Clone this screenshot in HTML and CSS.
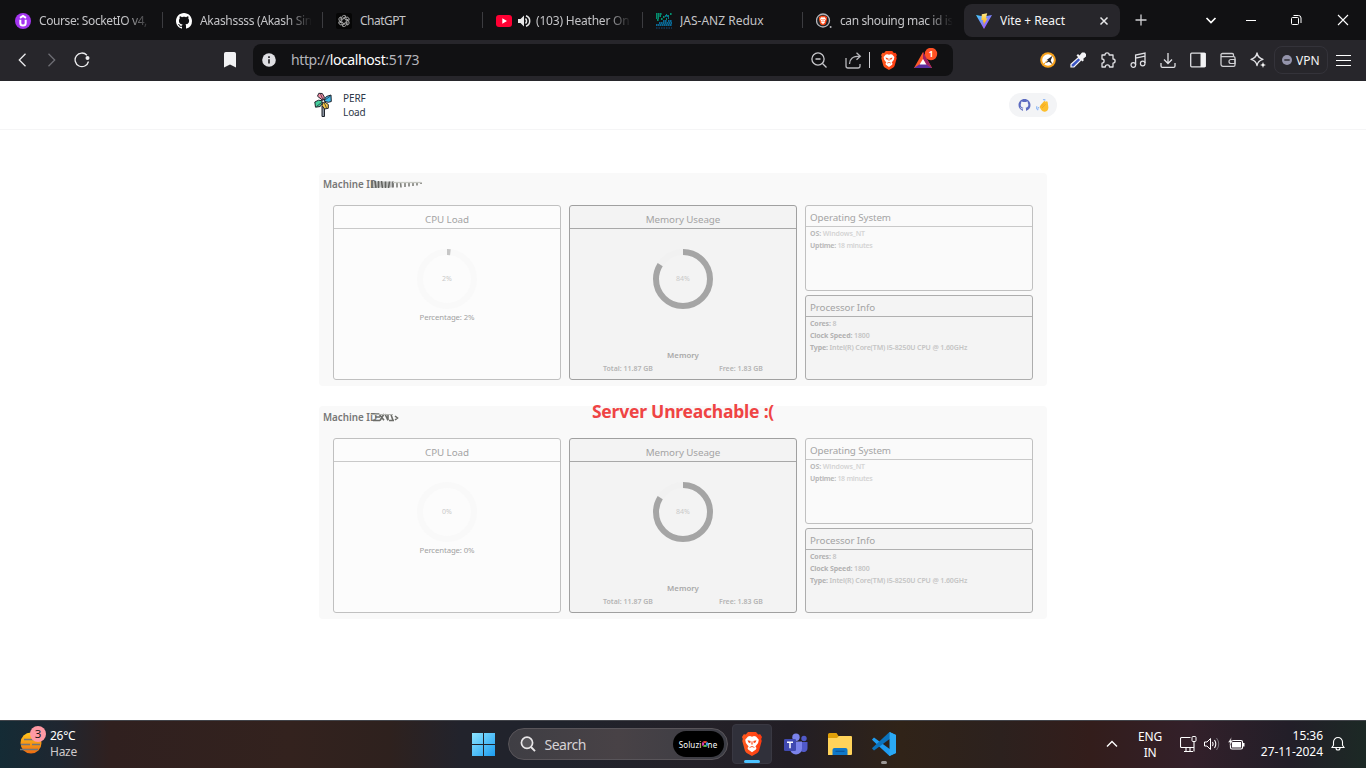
FILE: index.html
```html
<!DOCTYPE html>
<html lang="en">
<head>
<meta charset="utf-8">
<title>Vite + React</title>
<link rel="stylesheet" href="styles.css">
</head>
<body>
<svg class="defs" aria-hidden="true">
  <defs>
    <linearGradient id="viteA" x1="0" y1="0" x2="1" y2="1"><stop offset="0" stop-color="#41d1ff"/><stop offset="1" stop-color="#bd34fe"/></linearGradient>
    <linearGradient id="viteB" x1="0" y1="0" x2="0" y2="1"><stop offset="0" stop-color="#ffea83"/><stop offset="1" stop-color="#ffa800"/></linearGradient>
    <linearGradient id="braveG" x1="0" y1="0" x2="1" y2="0"><stop offset="0" stop-color="#ff5a1f"/><stop offset="1" stop-color="#ff3a10"/></linearGradient>
    <linearGradient id="winG" gradientUnits="userSpaceOnUse" x1="0" y1="0" x2="23" y2="23"><stop offset="0" stop-color="#8ce4ff"/><stop offset="1" stop-color="#1c9cf0"/></linearGradient>
    <linearGradient id="sunG" x1="0" y1="0" x2="0" y2="1"><stop offset="0" stop-color="#ffc81e"/><stop offset="1" stop-color="#ee6b10"/></linearGradient>
    <symbol id="github" viewBox="0 0 16 16"><path fill-rule="evenodd" d="M8 0C3.58 0 0 3.58 0 8c0 3.54 2.29 6.53 5.47 7.59.4.07.55-.17.55-.38 0-.19-.01-.82-.01-1.49-2.01.37-2.53-.49-2.69-.94-.09-.23-.48-.94-.82-1.13-.28-.15-.68-.52-.01-.53.63-.01 1.08.58 1.23.82.72 1.21 1.87.87 2.33.66.07-.52.28-.87.51-1.07-1.78-.2-3.64-.89-3.64-3.95 0-.87.31-1.59.82-2.15-.08-.2-.36-1.02.08-2.12 0 0 .67-.21 2.2.82.64-.18 1.32-.27 2-.27s1.36.09 2 .27c1.53-1.04 2.2-.82 2.2-.82.44 1.1.16 1.92.08 2.12.51.56.82 1.27.82 2.15 0 3.07-1.87 3.75-3.65 3.95.29.25.54.73.54 1.48 0 1.07-.01 1.93-.01 2.2 0 .21.15.46.55.38A8.01 8.01 0 0 0 16 8c0-4.42-3.58-8-8-8z"/></symbol>
    <symbol id="brave" viewBox="0 0 20 24"><path fill="url(#braveG)" d="M6 0h8l2.2 2.4 2-.2L20 5l-.8 2 .5 2-2.6 9.6c-.4 1.2-1.2 2-2.2 2.7L10 24l-4.9-2.7c-1-.7-1.8-1.5-2.2-2.7L.3 9l.5-2L0 5l1.8-2.8 2 .2z"/><path fill="#fff" d="M6 4.400 8 4l2 .7 2-.7 2 .4 2.800 3.300-.7 3.200-2.700 3.500 1.100 1.600-.6 1.400L10 20.300l-3.900-2.900-.6-1.400 1.100-1.600-2.700-3.500-.7-3.200z"/><path fill="#fb4a1b" d="m5.600 8.300 3.100.7-.5 2.300-1.900-1.100zM14.400 8.300l-3.100.7.5 2.300 1.900-1.100zM7.300 15.200l2.700-1.200 2.700 1.200-.5.600-2.200-.9-2.200.9zM9.600 9.200h.8l.3 3.200h-1.400z"/></symbol>
  </defs>
</svg>

<header class="browser">
  <div class="tabs">
    <div class="tab">
      <svg class="fav" viewBox="0 0 16 16"><circle cx="8" cy="8" r="8" fill="#a435f0"/><path d="M5 4.800 8 3l3 1.800M5.300 6.700v3.400a2.700 2.500 0 0 0 5.400 0V6.700" fill="none" stroke="#fff" stroke-width="2"/></svg>
      <span class="tab-title t1">Course: SocketIO v4,</span>
    </div>
    <div class="tab">
      <svg class="fav" fill="#fff"><use href="#github"/></svg>
      <span class="tab-title t2">Akashssss (Akash Sin</span>
    </div>
    <div class="tab">
      <svg class="fav" viewBox="0 0 16 16"><rect width="16" height="16" rx="2" fill="#060606"/><g fill="none" stroke="#c4c4c4" stroke-width=".8"><path id="petal" d="M5.800 8.800V4.600a2.300 2.300 0 0 1 4.200-1.200L6.800 5.300"/><use href="#petal" transform="rotate(60 8 8)"/><use href="#petal" transform="rotate(120 8 8)"/><use href="#petal" transform="rotate(180 8 8)"/><use href="#petal" transform="rotate(240 8 8)"/><use href="#petal" transform="rotate(300 8 8)"/></g></svg>
      <span class="tab-title t3">ChatGPT</span>
    </div>
    <div class="tab">
      <svg class="fav" viewBox="0 0 16 16"><rect y="2" width="16" height="12" rx="3" fill="#ff0033"/><path d="M6.300 5.200v5.600L11 8z" fill="#fff"/></svg>
      <svg class="audio" viewBox="0 0 14 14"><path d="M1 5v4h2.500L7 12.500v-11L3.500 5z" fill="#e8e8e8"/><path d="M8.500 4.500a3.500 3.500 0 0 1 0 5M9 1.800a5.500 5.500 0 0 1 0 10.400" fill="none" stroke="#e8e8e8" stroke-width="1.500"/></svg>
      <span class="tab-title t4">(103) Heather On</span>
    </div>
    <div class="tab">
      <svg class="fav" viewBox="0 0 16 16"><path d="M0 1h6M0 3h5M0 5h3M7 4h2M10 2h1M12 3h1M14 1h2M1 7h2M5 6h2M10 6h1" stroke="#00b98e" stroke-width="1.600" stroke-dasharray="1.600 .4"/><path d="M9 3h3M12 5h1M7 8h4M12 8h4M3 10h13M0 12h16" stroke="#0787c2" stroke-width="1.600" stroke-dasharray="1.600 .4"/><path d="M0 15h16" stroke="#12304a" stroke-width="2" stroke-dasharray="1.500 1"/></svg>
      <span class="tab-title t5">JAS-ANZ Redux</span>
    </div>
    <div class="tab">
      <svg class="fav" viewBox="0 0 16 16"><circle cx="7" cy="7.500" r="6.500" fill="#202226" stroke="#b4b5ba" stroke-width="1.300"/><use href="#brave" x="2.500" y="2.500" width="9" height="10"/><circle cx="14.600" cy="14" r="1" fill="#b4b5ba"/></svg>
      <span class="tab-title t6">can shouing mac id is</span>
    </div>
    <div class="tab active">
      <svg class="fav" viewBox="0 0 16 16"><path d="m0 2 8 14 8-14-8 1.500z" fill="url(#viteA)"/><path d="M11.200.2 5.800 1.200 5.400 7.300l1.900-.3-.6 2.400 1.300-.4-.7 3.500L11.600 5.300l-1.800.3z" fill="url(#viteB)"/></svg>
      <span class="tab-title t7">Vite + React</span>
      <svg class="close" viewBox="0 0 10 10"><path d="m1.500 1.500 7 7m0-7-7 7" stroke="#e8e8ea" stroke-width="1.500"/></svg>
    </div>
    <svg class="plus" viewBox="0 0 12 12"><path d="M6 .5v11M.5 6h11" stroke="#d0d0d3" stroke-width="1.300"/></svg>
    <div class="winbtns">
      <svg class="tabsearch" width="12" height="12" viewBox="0 0 12 12"><path d="m1.500 4 4.500 4.500L10.500 4" fill="none" stroke="#fff" stroke-width="1.700"/></svg>
      <svg width="10" height="12" viewBox="0 0 10 12"><path d="M0 6.500h10" stroke="#fff"/></svg>
      <svg width="11" height="12" viewBox="0 0 11 12"><rect x=".5" y="3.500" width="7" height="7" rx="1" fill="none" stroke="#fff"/><path d="M2.500 1.500h5a2.500 2.500 0 0 1 2.500 2.500v5" fill="none" stroke="#fff"/></svg>
      <svg width="12" height="12" viewBox="0 0 12 12"><path d="m1 1 10 10m0-10L1 11" stroke="#fff" stroke-width="1.100"/></svg>
    </div>
  </div>
  <div class="toolbar">
    <svg class="nav-back" viewBox="0 0 10 14"><path d="M8.500.8 2.300 7l6.200 6.200" fill="none" stroke="#ececee" stroke-width="1.300"/></svg>
    <svg class="nav-fwd" viewBox="0 0 10 14"><path d="M1.500.8 7.700 7l-6.200 6.200" fill="none" stroke="#6e6e74" stroke-width="1.300"/></svg>
    <svg class="nav-reload" viewBox="0 0 16 16"><path d="M12.900 3.200A6.800 6.800 0 1 0 14.500 9.500" fill="none" stroke="#ececee" stroke-width="1.300"/><circle cx="13.500" cy="6" r="2" fill="#ececee"/></svg>
    <svg class="bookmark" viewBox="0 0 12 16"><path d="M0 1.800A1.800 1.800 0 0 1 1.800 0h8.400A1.800 1.800 0 0 1 12 1.800V15.500L6 12.500 0 15.500z" fill="#f2f2f4"/></svg>
    <div class="urlbar">
      <svg class="info" viewBox="0 0 14 14"><circle cx="7" cy="7" r="6.800" fill="#dfdfe3"/><path d="M7 6.200v4.300M7 3.200v1.700" stroke="#17171a" stroke-width="1.600"/></svg>
      <span class="url">http://<b>localhost</b>:5173</span>
      <svg class="zoomout" viewBox="0 0 16 16"><circle cx="7" cy="7" r="6.100" fill="none" stroke="#c8c8cc" stroke-width="1.300"/><path d="M4.500 7h5M11.500 11.500l4 4" stroke="#c8c8cc" stroke-width="1.300"/></svg>
      <svg class="share" viewBox="0 0 17 17"><path d="M1 6v8a2 2 0 0 0 2 2h10a2 2 0 0 0 2-2v-2M4.500 12c0-5 3-7.800 10.500-7.800M11.500.8 15.300 4.200l-3.800 3.600" fill="none" stroke="#b8b8bc" stroke-width="1.300"/></svg>
      <i class="divider"></i>
      <svg class="lion"><use href="#brave"/></svg>
      <svg class="rewards" viewBox="0 0 24 22"><path d="M9 4 0 20h18z" fill="#ff5a2a"/><path d="m0 20 9-6 9 6z" fill="#5b2fa0"/><path d="m9 4 9 16-6-4-3-5z" fill="#9e1f63"/><path d="m9 11 3.400 5.500H5.600z" fill="#fff"/><circle cx="17" cy="6" r="6.200" fill="#ff5025"/><text x="17" y="9" text-anchor="middle" class="badge-text">1</text></svg>
    </div>
    <div class="tools">
      <svg width="16" height="16" viewBox="0 0 16 16"><circle cx="8" cy="8" r="7.800" fill="#f7a11b"/><circle cx="8" cy="8" r="5.800" fill="#fff"/><path d="M3.500 5.500 7 7.800l5.500-4-1.800 4.700 1.800 3.700-3.700-2.500-3.300 1.500L8 8.500z" fill="#27262b"/><path d="m4 12 3-3.500" stroke="#f7a11b"/></svg>
      <svg width="16" height="16" viewBox="0 0 16 16"><path d="m9.500 3.500 2.500-3h2.500L16 2v2.500l-3 2.500 1 1-1.500 1.500-6-6L8 2z" fill="#f5f5f8"/><path d="m8.500 5.500 2.500 2.500-7 7H1v-2.800z" fill="#3b55c4" stroke="#f5f5f8" stroke-width="1.200"/></svg>
      <svg width="16" height="16" viewBox="0 0 16 16"><path d="M2 3h3a2 2 0 0 1 4.200 0H13v4a2.100 2.100 0 0 1 0 4.200V15H9.500a2 2 0 0 0-4.200 0H2v-3.800A2.100 2.100 0 0 0 2 7z" fill="none" stroke="#e0e0e4" stroke-width="1.300" stroke-linejoin="round"/></svg>
      <svg width="16" height="16" viewBox="0 0 16 16"><path d="M5.600 13V3l9.400-2v10M5.600 6.200 15 4.200" fill="none" stroke="#e0e0e4" stroke-width="1.300"/><circle cx="3.300" cy="13" r="2.300" fill="none" stroke="#e0e0e4" stroke-width="1.200"/><circle cx="12.700" cy="11.500" r="2.300" fill="none" stroke="#e0e0e4" stroke-width="1.200"/></svg>
      <svg width="16" height="16" viewBox="0 0 16 16"><path d="M8 1v10M4 7.500l4 4 4-4M1 11v3a1.300 1.300 0 0 0 1.300 1.300h11.400A1.300 1.300 0 0 0 15 14v-3" fill="none" stroke="#e0e0e4" stroke-width="1.300"/></svg>
      <svg width="16" height="16" viewBox="0 0 16 16"><rect x=".7" y="1.200" width="14.600" height="13.600" rx="1" fill="none" stroke="#e0e0e4" stroke-width="1.300"/><path d="M10.500 1h5v14h-5z" fill="#f2f2f4"/></svg>
      <svg width="16" height="16" viewBox="0 0 16 16"><path d="M13.500 4V2.800a1.300 1.300 0 0 0-1.300-1.300H2.500a1.500 1.500 0 0 0 0 3.200h11.200A1.300 1.300 0 0 1 15 6v7a1.300 1.300 0 0 1-1.300 1.300H3A2 2 0 0 1 1 12.300V3" fill="none" stroke="#cfcfd3" stroke-width="1.300"/><path d="M15 7.500h-4a2 2 0 0 0 0 4h4z" fill="none" stroke="#cfcfd3" stroke-width="1.200"/></svg>
      <svg width="16" height="16" viewBox="0 0 16 16"><path d="M7 1q1 5 6 6.300Q8 8.500 7 13.500 6 8.500 1 7.300 6 6 7 1z" fill="none" stroke="#e0e0e4" stroke-width="1.300" stroke-linejoin="round"/><path d="m13 10 .8 2.200 2.200.8-2.200.8L13 16l-.8-2.200L10 13l2.200-.8z" fill="#fff"/></svg>
    </div>
    <div class="vpn"><svg width="10" height="10" viewBox="0 0 10 10"><circle cx="5" cy="5" r="5" fill="#9494ab"/><path d="M2.300 5h5.400" stroke="#27262b" stroke-width="1.400"/></svg><span>VPN</span></div>
    <svg class="menu" viewBox="0 0 15 13"><path d="M0 1.500h15M0 6.500h15M0 11.500h15" stroke="#fff" stroke-width="1.200"/></svg>
  </div>
</header>

<main class="page">
  <nav class="appbar">
    <div class="logo">
      <svg width="18" height="26" viewBox="0 0 18 26"><path d="M8 14h2.500v10.500H8z" fill="#8a929e" stroke="#20242c"/><g stroke="#20242c" stroke-width="1" stroke-linejoin="round"><path d="M9.500 9 3.500 4.200 4.800 1.300l3.500.2 2 3.500z" fill="#f78fa7"/><path d="m9.500 9 2.800-4.500L17 3l.3 6.500-3 .8z" fill="#3fb8e8"/><path d="m9.500 9 4.800 3.500v3.800l-3.800.7L8 13.500z" fill="#f6c945"/><path d="m9.500 9-3.300 5.500-4.700.7L.8 10l3.700-1.800z" fill="#45cf9d"/><path d="M9.500 9 6.500 2M9.500 9l7-5M9.500 9l3 7M9.500 9l-7 5.500" fill="none" stroke-width=".7"/><circle cx="9.300" cy="9.200" r="1.500" fill="#e9edf0"/></g></svg>
      <div class="brand">PERF<br>Load</div>
    </div>
    <div class="pill">
      <svg width="13" height="12" fill="#5c6bc0"><use href="#github"/></svg>
      <svg width="13" height="13" viewBox="0 0 13 13"><path d="M3.500 8 5 5.500l3-3.200q1-.8 1.300 0L9.600 3l1-.7q1.300-.2 1.200 1.700l.6 4.500q-.3 4-3.400 4.200-2.300.3-3.700-1.700z" fill="#fcbf2e"/><path d="m5 7.500 3-3M6 9l3.500-3.800" stroke="#f29a16" stroke-width=".7"/><path d="M7 .8q1.500-.6 2.300.5M.7 7.200v2.300l1.500 1.600M2.500 8v1.500" fill="none" stroke="#8fb8f5" stroke-width="1.200"/></svg>
    </div>
  </nav>

  <div class="board">
    <section class="machine">
      <h2 class="machine-id">Machine ID<svg class="smudge" width="62" height="16" viewBox="0 0 62 16"><path d="M0 8.500h22" stroke="#bfc0bf" stroke-width="6"/><path d="M1 5v7M4 5l1 7M7.500 5v7M10.500 5l1 7M14.500 5.500v6.500M18.500 5.500l-1 6.500M22 5.500v6" stroke="#626360" stroke-width="1.600"/><path d="M26 6v5.500M29.500 6l.5 5.500M34 6.500v4.500M38 6.500v4M42 6.500v3.500M46 6.500v3M50 6.500v1.600" stroke="#7d7e79" stroke-width="1.600"/><path d="M22 6.500h28" stroke="#c6c8c2" stroke-width="1.300"/></svg></h2>
      <div class="cards">
        <article class="card cpu">
          <h3>CPU Load</h3>
          <svg class="ring" viewBox="0 0 60 60"><circle cx="30" cy="30" r="27" class="track-light"/><path d="M30 3A27 27 0 0 1 33.400 3.200" class="arc-light"/><text x="30" y="32">2%</text></svg>
          <p class="pct">Percentage: 2%</p>
        </article>
        <article class="card mem">
          <h3>Memory Useage</h3>
          <svg class="ring" viewBox="0 0 60 60"><circle cx="30" cy="30" r="27" class="track-mid"/><circle cx="30" cy="30" r="27" pathLength="100" stroke-dasharray="84 16" transform="rotate(-90 30 30)" class="arc-mid"/><text x="30" y="32">84%</text></svg>
          <p class="mem-title">Memory</p>
          <div class="mem-row"><span>Total: 11.87 GB</span><span>Free: 1.83 GB</span></div>
        </article>
        <div class="side">
          <article class="card os">
            <h3>Operating System</h3>
            <p><b>OS:</b> Windows_NT</p>
            <p><b>Uptime:</b> 18 minutes</p>
          </article>
          <article class="card proc">
            <h3>Processor Info</h3>
            <p><b>Cores:</b> 8</p>
            <p><b>Clock Speed:</b> 1800</p>
            <p class="type"><b>Type:</b> Intel(R) Core(TM) i5-8250U CPU @ 1.60GHz</p>
          </article>
        </div>
      </div>
    </section>

    <section class="machine">
      <h2 class="machine-id">Machine ID<svg class="smudge" width="62" height="16" viewBox="0 0 62 16"><path d="M0 5h8M4 8h5M2 11.500h7M8 5l5 6.300M13 5l-4 6.500M14 5l3 6.300M17 5v6M18 11.500h5M20 5.500l2 6M24 7l2.500 2-2.500 2" fill="none" stroke="#6c6d69" stroke-width="1.600"/><path d="M0 5.500h22" stroke="#b5b6b2"/></svg></h2>
      <div class="cards">
        <article class="card cpu">
          <h3>CPU Load</h3>
          <svg class="ring" viewBox="0 0 60 60"><circle cx="30" cy="30" r="27" class="track-light"/><text x="30" y="32">0%</text></svg>
          <p class="pct">Percentage: 0%</p>
        </article>
        <article class="card mem">
          <h3>Memory Useage</h3>
          <svg class="ring" viewBox="0 0 60 60"><circle cx="30" cy="30" r="27" class="track-mid"/><circle cx="30" cy="30" r="27" pathLength="100" stroke-dasharray="84 16" transform="rotate(-90 30 30)" class="arc-mid"/><text x="30" y="32">84%</text></svg>
          <p class="mem-title">Memory</p>
          <div class="mem-row"><span>Total: 11.87 GB</span><span>Free: 1.83 GB</span></div>
        </article>
        <div class="side">
          <article class="card os">
            <h3>Operating System</h3>
            <p><b>OS:</b> Windows_NT</p>
            <p><b>Uptime:</b> 18 minutes</p>
          </article>
          <article class="card proc">
            <h3>Processor Info</h3>
            <p><b>Cores:</b> 8</p>
            <p><b>Clock Speed:</b> 1800</p>
            <p class="type"><b>Type:</b> Intel(R) Core(TM) i5-8250U CPU @ 1.60GHz</p>
          </article>
        </div>
      </div>
    </section>
    <div class="alert">Server Unreachable :(</div>
  </div>
</main>

<footer class="taskbar">
  <div class="weather">
    <svg width="28" height="32" viewBox="0 0 28 32"><circle cx="12" cy="18" r="10.500" fill="url(#sunG)"/><path d="M5 14.500h13M2 19.500h9M13 19.500h8M1 24.500h18" stroke="#74767a" stroke-width="1.600"/><circle cx="19" cy="9" r="8" fill="#ff99a4"/><text x="19" y="13" text-anchor="middle" class="wbadge">3</text></svg>
    <div class="wtext"><div>26°C</div><div class="haze">Haze</div></div>
  </div>
  <div class="apps">
    <svg class="start" viewBox="0 0 23 23"><path d="M0 0h11v11H0zM12 0h11v11H12zM0 12h11v11H0zM12 12h11v11H12z" fill="url(#winG)"/></svg>
    <div class="search">
      <svg width="16" height="16" viewBox="0 0 16 16"><circle cx="7" cy="6.800" r="5.600" fill="rgba(255,255,255,.12)" stroke="#e8e6e8" stroke-width="1.700"/><path d="m11 11 4 4.200" stroke="#e8e6e8" stroke-width="1.900"/></svg>
      <span class="search-label">Search</span>
      <span class="sol">Soluzi<i></i>ne</span>
    </div>
    <div class="app current"><svg width="20" height="24"><use href="#brave"/></svg></div>
    <div class="app teams"><svg width="24" height="23" viewBox="0 0 24 23"><circle cx="12" cy="4.200" r="3.700" fill="#7b83eb"/><circle cx="20" cy="5.500" r="2.700" fill="#5059c9"/><path d="M16 9h7.500v6a4 4 0 0 1-7.500 2z" fill="#5059c9"/><path d="M6 8.500h12v7a6 6 0 0 1-12 0z" fill="#7b83eb"/><rect y="6" width="12" height="12" rx="1.300" fill="#4049b0"/><path d="M3 9.300h6M6 9.300v6" stroke="#fff" stroke-width="1.500"/></svg></div>
    <div class="app folder"><svg width="24" height="22" viewBox="0 0 24 22"><path d="M0 1.500A1.500 1.500 0 0 1 1.500 0h7l2 3H22v6H0z" fill="#e0a008"/><path d="M0 5h9l2-2h12a1 1 0 0 1 1 1v17a1 1 0 0 1-1 1H0z" fill="#ffd35a"/><path d="M4.500 22v-5a2 2 0 0 1 2-2h11a2 2 0 0 1 2 2v5z" fill="#0f78c8"/><path d="M7.500 18.300h9" stroke="#09559a" stroke-width="1.200"/></svg></div>
    <div class="app vs"><svg width="24" height="24" viewBox="0 0 24 24"><path d="m17.500 0 6.500 3v18l-6.500 3L1 8.800 0 7.400l2-1.900L18 17.300V6.700z" fill="#1f9cf0"/><path d="M17.500 0 1 15.200 0 16.600l2 1.900L18 6.700z" fill="#0b73bd"/><path d="m17.500 0 6.500 3v18l-6.500 3z" fill="#2aa9f5"/></svg><i class="dot"></i></div>
  </div>
  <div class="tray">
    <svg class="chev" viewBox="0 0 12 8"><path d="m1 6.500 5-5 5 5" fill="none" stroke="#fff" stroke-width="1.400"/></svg>
    <div class="lang">ENG<br>IN</div>
    <svg class="net" viewBox="0 0 17 16"><path d="M10.500 1.500H1.500a1 1 0 0 0-1 1v8a1 1 0 0 0 1 1h12M4 15.500h9M6 12v3M10 12v3M14 5.500v10" fill="none" stroke="#fff" stroke-width="1.100"/><rect x="12" y=".5" width="4" height="5" rx="1" fill="none" stroke="#fff"/></svg>
    <svg class="vol" viewBox="0 0 16 14"><path d="M.5 5v4h2.500l3.500 3.500v-11L3 5z" fill="none" stroke="#fff"/><path d="M8.500 5q1.300 2 0 4M10.500 3q2.600 4 0 8" fill="none" stroke="#fff" stroke-width="1.100"/><path d="M12.500 1q4.500 6 0 12" fill="none" stroke="#77727a"/></svg>
    <svg class="bat" viewBox="0 0 17 14"><rect x="2.500" y="3.500" width="12" height="8.500" rx="1.500" fill="none" stroke="#fff" stroke-width="1.200"/><path d="M4 5h9v5.500H4zM15 6h1.500v3.500H15z" fill="#fff"/><path d="M3.500 0 0 5.500h2L1.500 9 5 3.800H3z" fill="#fff" stroke="#2d1d25" stroke-width=".4"/></svg>
    <div class="clock">15:36<br><span>27-11-2024</span></div>
    <svg class="bell" viewBox="0 0 14 16"><path d="M1 11.500h12l-1.500-2.300V6a4.500 4.500 0 0 0-9 0v3.200zM5 12a2 2 0 0 0 4 0" fill="none" stroke="#fff" stroke-width="1.100"/></svg>
  </div>
</footer>
</body>
</html>
```
FILE: styles.css
```css
* { box-sizing: border-box; }
body {
  margin: 0;
  width: 1366px;
  height: 768px;
  overflow: hidden;
  display: flex;
  flex-direction: column;
  font-family: "Noto Sans", "Open Sans", sans-serif;
  background: #fff;
}
svg { display: block; flex: none; }
.defs { position: absolute; width: 0; height: 0; }
h2, h3, p { margin: 0; }

/* browser frame */
.browser { height: 81px; flex: none; background: #27262b; }
.tabs { height: 40px; display: flex; align-items: center; background: #111113; padding-left: 3px; }
.tab {
  width: 160px;
  height: 16px;
  display: flex;
  align-items: center;
  padding: 0 8px 0 13px;
  border-right: 1px solid #3c3c40;
  flex: none;
}
.tab:first-child { padding-left: 12px; }
.tab:nth-child(6) { border-right: 0; }
.tab:not(.active) .fav { margin-top: 2px; }
.fav { width: 16px; height: 16px; }
.audio { width: 14px; height: 14px; margin-left: 5px; margin-top: 1px; }
.audio + .tab-title { margin-left: 5px; }
.tab-title {
  margin: 2px 0 0 8px;
  flex: 1;
  min-width: 0;
  overflow: hidden;
  white-space: nowrap;
  font-size: 12px;
  line-height: 18px;
  color: #c4c4c7;
  letter-spacing: -0.25px;
}
.t1, .t2, .t4, .t6 {
  -webkit-mask-image: linear-gradient(90deg, #000 calc(100% - 28px), transparent calc(100% - 2px));
  mask-image: linear-gradient(90deg, #000 calc(100% - 28px), transparent calc(100% - 2px));
}
.t1 { letter-spacing: -0.4px; }
.t2 { letter-spacing: -0.3px; }
.t3 { letter-spacing: -0.5px; }
.t4 { letter-spacing: -0.2px; }
.t5 { letter-spacing: 0; }
.t6 { letter-spacing: -0.4px; }
.tab.active {
  width: 156px;
  height: 33px;
  margin: 1px 0 0 1px;
  padding: 0 11px 0 12px;
  border: 0;
  border-radius: 8px;
  background: #27262b;
}
.active .tab-title { color: #f4f4f5; letter-spacing: -0.05px; margin-top: 0; }
.close { width: 10px; height: 10px; }
.plus { width: 12px; height: 12px; margin-left: 15px; }
.winbtns { display: flex; align-items: center; margin-left: auto; margin-right: 17px; gap: 35px; }
.tabsearch { margin-right: -6px; }

.toolbar { height: 41px; padding-bottom: 1px; display: flex; align-items: center; }
.nav-back { width: 10px; height: 14px; margin-left: 17px; }
.nav-fwd { width: 10px; height: 14px; margin-left: 20px; }
.nav-reload { width: 16px; height: 16px; margin-left: 17px; }
.bookmark { width: 12px; height: 16px; margin-left: 134px; }
.urlbar {
  width: 700px;
  height: 32px;
  margin-left: 17px;
  padding-left: 9px;
  border-radius: 8px;
  background: #111113;
  display: flex;
  align-items: center;
}
.info { width: 14px; height: 14px; }
.url { margin: -1px 0 0 15px; width: 520px; font-size: 14px; letter-spacing: -0.4px; color: #b4b4ba; }
.url b { font-weight: 400; color: #fff; }
.zoomout { width: 16px; height: 16px; }
.share { width: 17px; height: 17px; margin-left: 18px; }
.divider { width: 1px; height: 16px; background: #d0d0d4; margin-left: 7px; }
.lion { width: 16px; height: 19px; margin-left: 11px; }
.rewards { width: 24px; height: 22px; margin-left: 17px; margin-top: -3px; }
.badge-text { font: 700 8px "Noto Sans", sans-serif; fill: #fff; }
.tools { display: flex; gap: 14px; margin-left: 87px; }
.vpn {
  margin-left: 8px;
  width: 54px;
  height: 28px;
  border: 1px solid #34333a;
  border-radius: 8px;
  display: flex;
  align-items: center;
  padding-left: 7px;
  gap: 4px;
  font-size: 12px;
  color: #f4f4f5;
}
.menu { width: 15px; height: 13px; margin-left: 8px; }

/* web page */
.page { flex: 1; min-height: 0; background: #fff; }
.appbar {
  height: 49px;
  border-bottom: 1px solid #f5f5f6;
  display: flex;
  justify-content: space-between;
  padding: 0 309px 0 314px;
}
.logo { display: flex; align-items: flex-start; gap: 11px; padding-top: 11px; }
.brand { margin-top: -1px; font-size: 10px; line-height: 14px; color: #2d3748; letter-spacing: -0.1px; }
.pill {
  margin-top: 12px;
  width: 48px;
  height: 24px;
  border-radius: 12px;
  background: #f3f4f6;
  display: flex;
  align-items: center;
  justify-content: center;
  gap: 5px;
}
.board {
  position: relative;
  width: 728px;
  margin: 43px auto 0;
  display: flex;
  flex-direction: column;
  gap: 20px;
}
.machine { height: 213px; border-radius: 4px; background: #f9f9f9; padding: 3px 14px 6px; }
.machine-id {
  display: flex;
  align-items: center;
  height: 16px;
  margin-left: -10px;
  font-size: 9.8px;
  font-weight: 600;
  color: #777;
}
.smudge { margin-left: -6px; filter: blur(.4px); }
.cards { display: grid; grid-template-columns: repeat(3, 228px); gap: 8px; height: 175px; margin-top: 13px; }
.card { border: 1px solid #c0c0c0; border-radius: 3px; background: #fcfcfc; color: #a9a9a9; }
.card h3 {
  height: 23px;
  padding-top: 3px;
  border-bottom: 1px solid #c9c9c9;
  font-size: 9.8px;
  line-height: 22px;
  font-weight: 400;
  text-align: center;
  color: #a4a4a4;
  letter-spacing: -0.08px;
}
.mem { border-color: #a0a0a0; background: #f3f3f3; }
.card.mem h3 { border-color: #a8a8a8; }
.ring { width: 60px; height: 60px; margin: 20px auto 0; }
.ring circle, .ring path { fill: none; stroke-width: 6; }
.ring .track-light { stroke: #f9f9f9; }
.ring .arc-light { stroke: #c6c6c6; }
.ring .track-mid { stroke: #f1f1f1; }
.ring .arc-mid { stroke: #a5a5a5; }
.ring text { font-size: 7px; text-anchor: middle; fill: #c9c9c9; }
.pct { margin-top: 2px; font-size: 7.8px; line-height: 13px; text-align: center; color: #a2a2a2; letter-spacing: -0.12px; }
.mem-title { margin-top: 40px; font-size: 7.8px; line-height: 13px; font-weight: 600; text-align: center; }
.mem-row {
  display: flex;
  justify-content: space-around;
  font-size: 7px;
  line-height: 13px;
  font-weight: 600;
  color: #b4b4b4;
}
.side { display: grid; grid-template-rows: 86px 85px; gap: 4px; }
.side .card h3 { height: 21px; padding: 1px 0 0 4px; text-align: left; letter-spacing: -0.1px; }
.os { background: #fafafa; }
.proc { background: #f4f4f4; border-color: #adadad; }
.side .proc h3 { border-color: #b0b0b0; }
.side h3 + p { margin-top: 1px; }
.side p { padding-left: 4px; font-size: 7px; line-height: 12px; font-weight: 600; color: #d4d4d4; white-space: nowrap; letter-spacing: -0.12px; }
.side .os p:last-child { letter-spacing: -0.28px; }
.side p b { font-weight: 700; color: #bababa; }
.side .proc p { color: #c4c4c4; }
.side .proc p b { color: #b2b2b2; }
.alert {
  position: absolute;
  top: 225px;
  left: 0;
  right: 0;
  text-align: center;
  font-size: 17.5px;
  line-height: 26px;
  font-weight: 700;
  letter-spacing: -0.22px;
  color: #ef4444;
}

/* taskbar */
.taskbar {
  height: 48px;
  flex: none;
  display: flex;
  justify-content: space-between;
  align-items: stretch;
  border-top: 1px solid #42444a;
  background: linear-gradient(90deg, #142b35 0, #1f2630 60px, #30201f 110px, #33221e 290px, #2e211e 390px, #22232c 460px, #20232c 560px, #242128 700px, #221e25 790px, #302318 900px, #2c211e 1000px, #331d1b 1090px, #33202a 1190px, #221e28 1290px, #1c2925 1366px);
  color: #fff;
}
.weather { width: 300px; display: flex; padding: 4px 0 0 19px; }
.wbadge { font: 11.500px "Noto Sans", sans-serif; fill: #1a1a1a; }
.wtext { margin: 3px 0 0 3px; font-size: 12px; line-height: 16px; letter-spacing: -0.25px; }
.haze { color: #cfcacb; }
.apps { display: flex; align-items: center; width: 440px; margin-left: -23px; padding-bottom: 1px; }
.start { width: 23px; height: 23px; }
.search {
  width: 220px;
  height: 32px;
  margin-left: 13px;
  padding: 0 3px 0 11px;
  display: flex;
  align-items: center;
  border: 1px solid #59555a;
  border-radius: 16px;
  background: linear-gradient(90deg, #3f3e44, #484246 50%, #3b3c44);
}
.search-label { margin-left: 9px; font-size: 14px; letter-spacing: -0.5px; color: #d6d2d5; }
.sol {
  margin-left: auto;
  width: 51px;
  height: 26px;
  border-radius: 13px;
  background: #000;
  display: flex;
  align-items: center;
  justify-content: center;
  font-size: 8px;
  letter-spacing: 0.15px;
}
.sol i { width: 6px; height: 6px; border-radius: 50%; border: 2px solid; border-color: #e8472e #3aa0e8 #5fc04b #d83bb0; }
.app { width: 40px; height: 40px; margin-left: 4px; display: flex; align-items: center; justify-content: center; position: relative; border-radius: 4px; }
.current { background: #30303a; border: 1px solid #393842; }
.current::after { content: ""; position: absolute; bottom: 0; left: 11px; width: 16px; height: 3px; border-radius: 2px; background: #4cc2ff; }
.dot { position: absolute; bottom: 0; left: 17px; width: 6px; height: 3px; border-radius: 2px; background: #9c9896; }
.tray { display: flex; align-items: center; padding-right: 21px; padding-bottom: 1px; font-size: 12px; line-height: 16px; letter-spacing: -0.25px; }
.chev { width: 12px; height: 8px; }
.lang { width: 26px; text-align: center; margin-left: 19px; margin-top: 2px; }
.net { width: 17px; height: 16px; margin-left: 17px; }
.vol { width: 16px; height: 14px; margin-left: 7px; }
.bat { width: 17px; height: 14px; margin-left: 8px; }
.clock { width: 70px; text-align: right; margin-left: 8px; white-space: nowrap; letter-spacing: -0.05px; }
.bell { width: 14px; height: 16px; margin-left: 8px; }
```
